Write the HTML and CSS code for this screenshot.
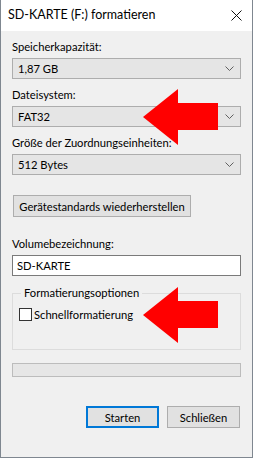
FILE: index.html
```html
<!DOCTYPE html>
<html lang="de">
<head>
    <meta charset="UTF-8">
    <title>SD-KARTE (F:) formatieren</title>
    <link rel="stylesheet" href="styles.css">
</head>
<body>
    <div class="window">
        <div class="titlebar">
            <span class="title">SD-KARTE (F:) formatieren</span>
            <svg class="close" width="11" height="11" viewBox="0 0 11 11">
                <path d="M0.5 0.5 L10.5 10.5 M10.5 0.5 L0.5 10.5" stroke="#111" stroke-width="1" fill="none"/>
            </svg>
        </div>

        <div class="content">
            <label class="field-label">Speicherkapazität:</label>
            <div class="combo">
                <span>1,87 GB</span>
                <svg class="chevron" width="9" height="5" viewBox="0 0 9 5"><polyline points="0.5,0.5 4.5,4.5 8.5,0.5" stroke="#606060" fill="none"/></svg>
            </div>

            <label class="field-label">Dateisystem:</label>
            <div class="combo">
                <span>FAT32</span>
                <svg class="chevron" width="9" height="5" viewBox="0 0 9 5"><polyline points="0.5,0.5 4.5,4.5 8.5,0.5" stroke="#606060" fill="none"/></svg>
            </div>

            <label class="field-label">Größe der Zuordnungseinheiten:</label>
            <div class="combo">
                <span>512 Bytes</span>
                <svg class="chevron" width="9" height="5" viewBox="0 0 9 5"><polyline points="0.5,0.5 4.5,4.5 8.5,0.5" stroke="#606060" fill="none"/></svg>
            </div>

            <button class="btn btn-defaults">Gerätestandards wiederherstellen</button>

            <label class="field-label">Volumebezeichnung:</label>
            <div class="textbox">SD-KARTE</div>

            <fieldset class="group">
                <legend>Formatierungsoptionen</legend>
                <div class="check-row">
                    <span class="checkbox"></span>
                    <span>Schnellformatierung</span>
                </div>
            </fieldset>

            <div class="progress"></div>

            <div class="actions">
                <button class="btn btn-default">Starten</button>
                <button class="btn">Schließen</button>
            </div>
        </div>

        <!-- rote Markierungspfeile -->
        <svg class="arrow arrow-fs" width="76" height="56" viewBox="0 0 76 56">
            <polygon points="0,28 35,0 35,14 75,14 75,41 35,41 35,56" fill="#ff0000"/>
        </svg>
        <svg class="arrow arrow-quick" width="76" height="56" viewBox="0 0 76 56">
            <polygon points="0,28 35,0 35,14 75,14 75,41 35,41 35,56" fill="#ff0000"/>
        </svg>
    </div>
</body>
</html>
```

FILE: styles.css
```css
body {
    margin: 0;
    font-family: 'Lato', 'Noto Sans', sans-serif;
    font-size: 11.2px;
    color: #000;
}
.window {
    position: relative;
    width: 253px;
    height: 458px;
    box-sizing: border-box;
    border: 1px solid #7f8790;
    border-top: none;
    background-color: #f0f0f0;
}
.titlebar {
    height: 31px;
    background-color: #fff;
    display: flex;
    align-items: center;
    justify-content: space-between;
    padding: 0 10px 0 7px;
}
.title {
    font-size: 12.5px;
    margin-top: -2px;
}
.close {
    display: block;
    margin-top: -1px;
}
.content {
    padding: 8px 11px 0 11px;
    display: flex;
    flex-direction: column;
}
.field-label {
    display: block;
    line-height: 16px;
    margin-bottom: 3px;
}
.combo {
    height: 21px;
    box-sizing: border-box;
    border: 1px solid #adadad;
    background-color: #e5e5e5;
    display: flex;
    align-items: center;
    justify-content: space-between;
    padding: 0 6px 0 5px;
    margin-bottom: 8px;
}
.chevron {
    display: block;
}
.btn {
    font-family: inherit;
    font-size: 11.2px;
    background-color: #e1e1e1;
    border: 1px solid #adadad;
    height: 22px;
    padding: 0;
    color: #000;
    white-space: nowrap;
}
.btn-defaults {
    align-self: flex-start;
    width: 178px;
    margin: 12px 0 0 1px;
}
.btn-defaults + .field-label {
    margin-top: 19px;
}
.textbox {
    height: 21px;
    box-sizing: border-box;
    border: 1px solid #7a7a7a;
    background-color: #fff;
    line-height: 19px;
    padding-left: 4px;
}
.group {
    margin: 10px 0 0 0;
    padding: 7px 6px 0 6px;
    height: 64px;
    box-sizing: border-box;
    border: 1px solid #dcdcdc;
}
.group legend {
    padding: 0 3px;
    margin-left: 2px;
    line-height: 14px;
}
.check-row {
    display: flex;
    align-items: center;
    gap: 2px;
    line-height: 15px;
}
.checkbox {
    width: 13px;
    height: 13px;
    box-sizing: border-box;
    border: 1px solid #333;
    background-color: #fff;
}
.progress {
    height: 14px;
    box-sizing: border-box;
    border: 1px solid #bcbcbc;
    background-color: #e6e6e6;
    margin-top: 13px;
}
.actions {
    display: flex;
    justify-content: flex-end;
    gap: 8px;
    margin-top: 29px;
    padding-right: 1px;
}
.actions .btn {
    width: 73px;
}
.btn-default {
    border: 2px solid #0078d7;
}
.arrow {
    position: absolute;
    left: 142px;
}
.arrow-fs {
    top: 89px;
}
.arrow-quick {
    top: 287px;
}
```
